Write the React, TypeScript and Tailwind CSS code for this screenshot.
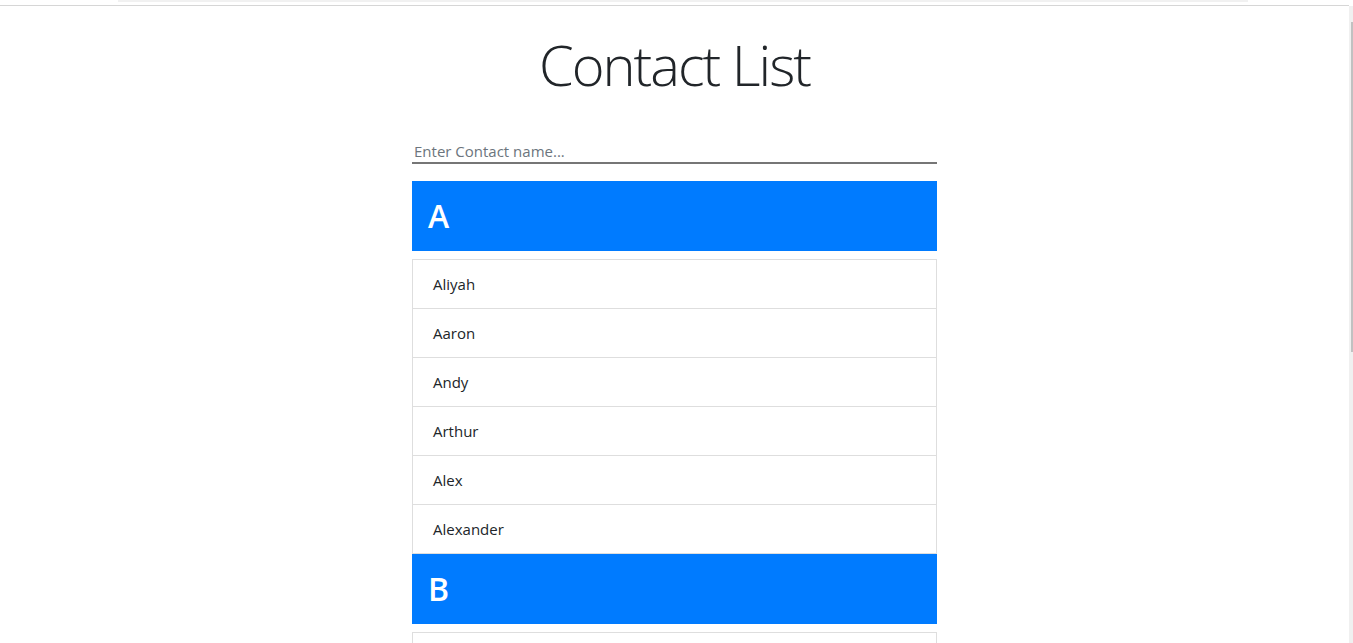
import React, { useState } from 'react';

const contacts: { letter: string; names: string[] }[] = [
    { letter: 'A', names: ['Aliyah', 'Aaron', 'Andy', 'Arthur', 'Alex', 'Alexander'] },
    { letter: 'B', names: ['Bella', 'Brian', 'Ben'] },
];

const ContactGroup: React.FC<{ letter: string; names: string[] }> = ({ letter, names }) => (
    <div>
        <div className="bg-[#007bff] h-[70px] flex items-center px-4 mb-2">
            <h2 className="text-[32px] font-semibold text-white leading-none">{letter}</h2>
        </div>
        <ul className="border-x border-b border-[#dedede]">
            {names.map((name) => (
                <li
                    key={name}
                    className="h-[49px] flex items-center px-5 text-[15px] text-[#212529] border-t border-[#dedede]"
                >
                    {name}
                </li>
            ))}
        </ul>
    </div>
);

export default function App() {
    const [query, setQuery] = useState('');

    const filtered = contacts
        .map((g) => ({ ...g, names: g.names.filter((n) => n.toLowerCase().includes(query.toLowerCase())) }))
        .filter((g) => g.names.length > 0);

    return (
        <div className="h-screen overflow-hidden bg-white flex font-['Open_Sans',sans-serif]">
            <div className="flex-1 min-w-0 flex flex-col">
                {/* browser chrome remnants */}
                <div className="h-[2px] shrink-0 ml-[118px] w-[1130px] bg-[#f1f1f1]" />
                <div className="h-[3px] shrink-0" />
                <div className="h-[1px] shrink-0 bg-[#d6d6d6]" />

                <div className="w-[525px] shrink-0 mx-auto">
                    <h1 className="text-center text-[56px] font-light text-[#212529] leading-[1.2] mt-[25px] mb-[41px] tracking-[-2px]">
                        Contact List
                    </h1>
                    <input
                        type="text"
                        value={query}
                        onChange={(e) => setQuery(e.target.value)}
                        placeholder="Enter Contact name..."
                        className="w-full h-[24px] px-[2px] text-[15px] border-b-2 border-[#767676] outline-none placeholder-[#6c757d] text-[#212529]"
                    />
                    <div className="mt-[17px]">
                        {filtered.map((g) => (
                            <ContactGroup key={g.letter} letter={g.letter} names={g.names} />
                        ))}
                    </div>
                </div>
            </div>

            {/* scrollbar */}
            <div className="w-[4px] shrink-0 mt-[6px] bg-[#f0f0f0] flex justify-end">
                <div className="w-[2px] h-[330px] mt-[16px] bg-[#c1c1c1]" />
            </div>
        </div>
    );
}
